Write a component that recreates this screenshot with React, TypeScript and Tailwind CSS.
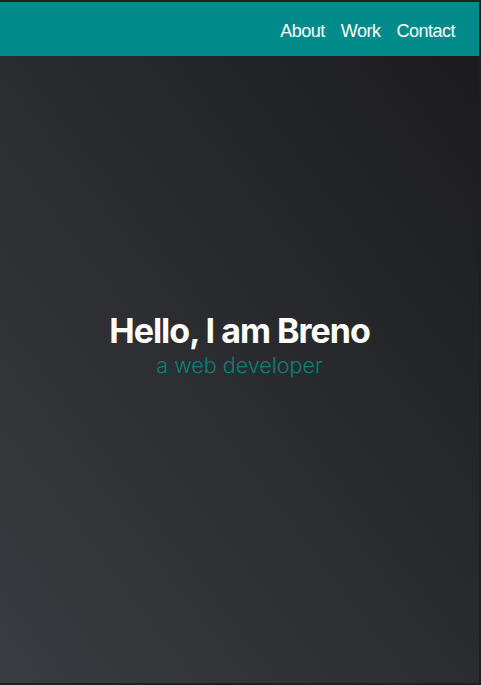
import React from "react";

export default function App() {
  return (
    <div className="w-[481px] h-[685px] bg-[#1e1f22] pt-[2px] pr-[2px] pb-[2px] flex flex-col overflow-hidden">
      <header className="h-[54px] bg-[#008b8b] flex items-center justify-end pr-[24px] pt-[4px] shrink-0">
        <nav className="flex gap-[16px] text-white text-[18px] tracking-[-0.5px]" style={{ fontFamily: '"Liberation Sans", Arial, sans-serif' }}>
          <a>About</a>
          <a>Work</a>
          <a>Contact</a>
        </nav>
      </header>
      <main className="flex-1 bg-[linear-gradient(to_top_right,#393c40,#1c1c1f)] flex flex-col items-center justify-center pb-[50px]" style={{ fontFamily: 'Inter, sans-serif' }}>
        <h1 className="text-white text-[34px] font-bold tracking-[-1px] leading-[40px]">Hello, I am Breno</h1>
        <p className="text-[#0a807a] text-[21.5px] font-light leading-[28px]">a web developer</p>
      </main>
    </div>
  );
}
